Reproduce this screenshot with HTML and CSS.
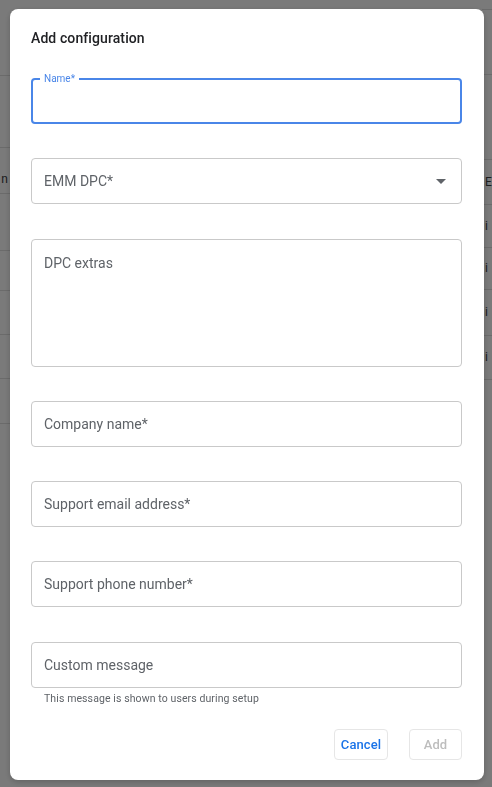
FILE: index.html
```html
<!DOCTYPE html>
<html lang="en">
<head>
<meta charset="utf-8">
<title>Add configuration</title>
<link rel="stylesheet" href="styles.css">
</head>
<body>
<div class="page">
  <div class="col col-left">
    <div class="cell h75"></div>
    <div class="cell h72"></div>
    <div class="cell h46 txt low">n</div>
    <div class="cell h57"></div>
    <div class="cell h40"></div>
    <div class="cell h44"></div>
    <div class="cell h44"></div>
    <div class="cell h45"></div>
  </div>
  <div class="col col-mid"></div>
  <div class="col col-right">
    <div class="cell h10"></div>
    <div class="cell h65"></div>
    <div class="cell h85"></div>
    <div class="cell h45 txt">E</div>
    <div class="cell h43 txt">i</div>
    <div class="cell h42 txt">i</div>
    <div class="cell h46 txt">i</div>
    <div class="cell h44 txt">i</div>
  </div>
</div>
<div class="overlay"></div>

<div class="dialog" role="dialog" aria-label="Add configuration">
  <h2 class="title">Add configuration</h2>
  <div class="fields">
    <div class="field focused">
      <span class="float-label">Name*</span>
    </div>
    <div class="field select">
      <span class="ph">EMM DPC*</span>
      <svg class="arrow" width="10" height="5" viewBox="0 0 10 5"><path d="M0 0h10L5 5z" fill="#5f6368"/></svg>
    </div>
    <div class="field area">
      <span class="ph">DPC extras</span>
    </div>
    <div class="field"><span class="ph">Company name*</span></div>
    <div class="field"><span class="ph">Support email address*</span></div>
    <div class="field"><span class="ph">Support phone number*</span></div>
    <div class="field-group">
      <div class="field"><span class="ph">Custom message</span></div>
      <div class="hint">This message is shown to users during setup</div>
    </div>
  </div>
  <div class="actions">
    <button class="btn cancel">Cancel</button>
    <button class="btn add" disabled>Add</button>
  </div>
</div>
</body>
</html>
```
FILE: styles.css
```css
* { box-sizing: border-box; }
html, body { margin: 0; padding: 0; }
body {
  width: 492px;
  height: 787px;
  overflow: hidden;
  font-family: Roboto, "Liberation Sans", Arial, sans-serif;
  background: #fff;
}

/* background page (dimmed) */
.page {
  display: flex;
  height: 787px;
}
.col-left { width: 10px; overflow: hidden; }
.col-mid { flex: 1; }
.col-right { width: 10px; overflow: hidden; }
.cell {
  border-bottom: 1px solid #e0e0e0;
  font-size: 12px;
  line-height: 15px;
  color: #3c4043;
  display: flex;
  align-items: center;
  white-space: nowrap;
}
.col-left .cell.txt { justify-content: flex-end; padding-right: 2px; }
.col-left .cell.low { align-items: flex-end; padding-bottom: 6px; }
.col-right .cell.txt { padding-left: 3px; }
.h10 { height: 10px; }
.h40 { height: 40px; }
.h42 { height: 42px; }
.h43 { height: 43px; }
.h44 { height: 44px; }
.h45 { height: 45px; }
.h46 { height: 46px; }
.h57 { height: 57px; }
.h65 { height: 65px; }
.h72 { height: 72px; }
.h75 { height: 76px; }
.h85 { height: 85px; }

.overlay {
  position: fixed;
  inset: 0;
  background: rgba(0, 0, 0, 0.52);
}

/* dialog */
.dialog {
  position: fixed;
  left: 10px;
  top: 9px;
  width: 474px;
  height: 771px;
  background: #fff;
  border-radius: 8px;
  box-shadow: 0 2px 6px rgba(0,0,0,0.2);
  padding: 19px 22px 20px 21px;
  display: flex;
  flex-direction: column;
}
.title {
  margin: 0;
  font-size: 14px;
  line-height: 20px;
  font-weight: 500;
  color: #202124;
  letter-spacing: 0.1px;
}
.fields {
  margin-top: 30px;
  display: flex;
  flex-direction: column;
  gap: 34.3px;
}
.field {
  position: relative;
  height: 46px;
  border: 1px solid #c9c9c9;
  border-radius: 4px;
  padding: 0 12px;
  display: flex;
  align-items: center;
}
.field.focused {
  border: 2px solid #4a86e8;
}
.float-label {
  position: absolute;
  left: 7px;
  top: -7px;
  padding: 0 4px;
  background: #fff;
  font-size: 10px;
  line-height: 12px;
  color: #4a86e8;
}
.ph {
  font-size: 14px;
  line-height: 20px;
  color: #5f6368;
}
.field.select { justify-content: space-between; padding-right: 15px; }
.arrow { display: block; }
.field.area {
  height: 128px;
  align-items: flex-start;
  padding-top: 13px;
}
.hint {
  margin-top: 4px;
  padding-left: 13px;
  font-size: 10.5px;
  line-height: 14px;
  letter-spacing: 0.1px;
  color: #5f6368;
}
.actions {
  margin-top: auto;
  display: flex;
  justify-content: flex-end;
  gap: 21px;
}
.btn {
  height: 31px;
  border: 1px solid #e6e6e6;
  border-radius: 4px;
  background: #fff;
  font-family: Roboto, "Liberation Sans", Arial, sans-serif;
  font-size: 13px;
  font-weight: 500;
  letter-spacing: 0.1px;
  padding: 0;
}
.btn.cancel { width: 54px; color: #1a73e8; }
.btn.add { width: 53px; color: #bdbdbd; }
```
